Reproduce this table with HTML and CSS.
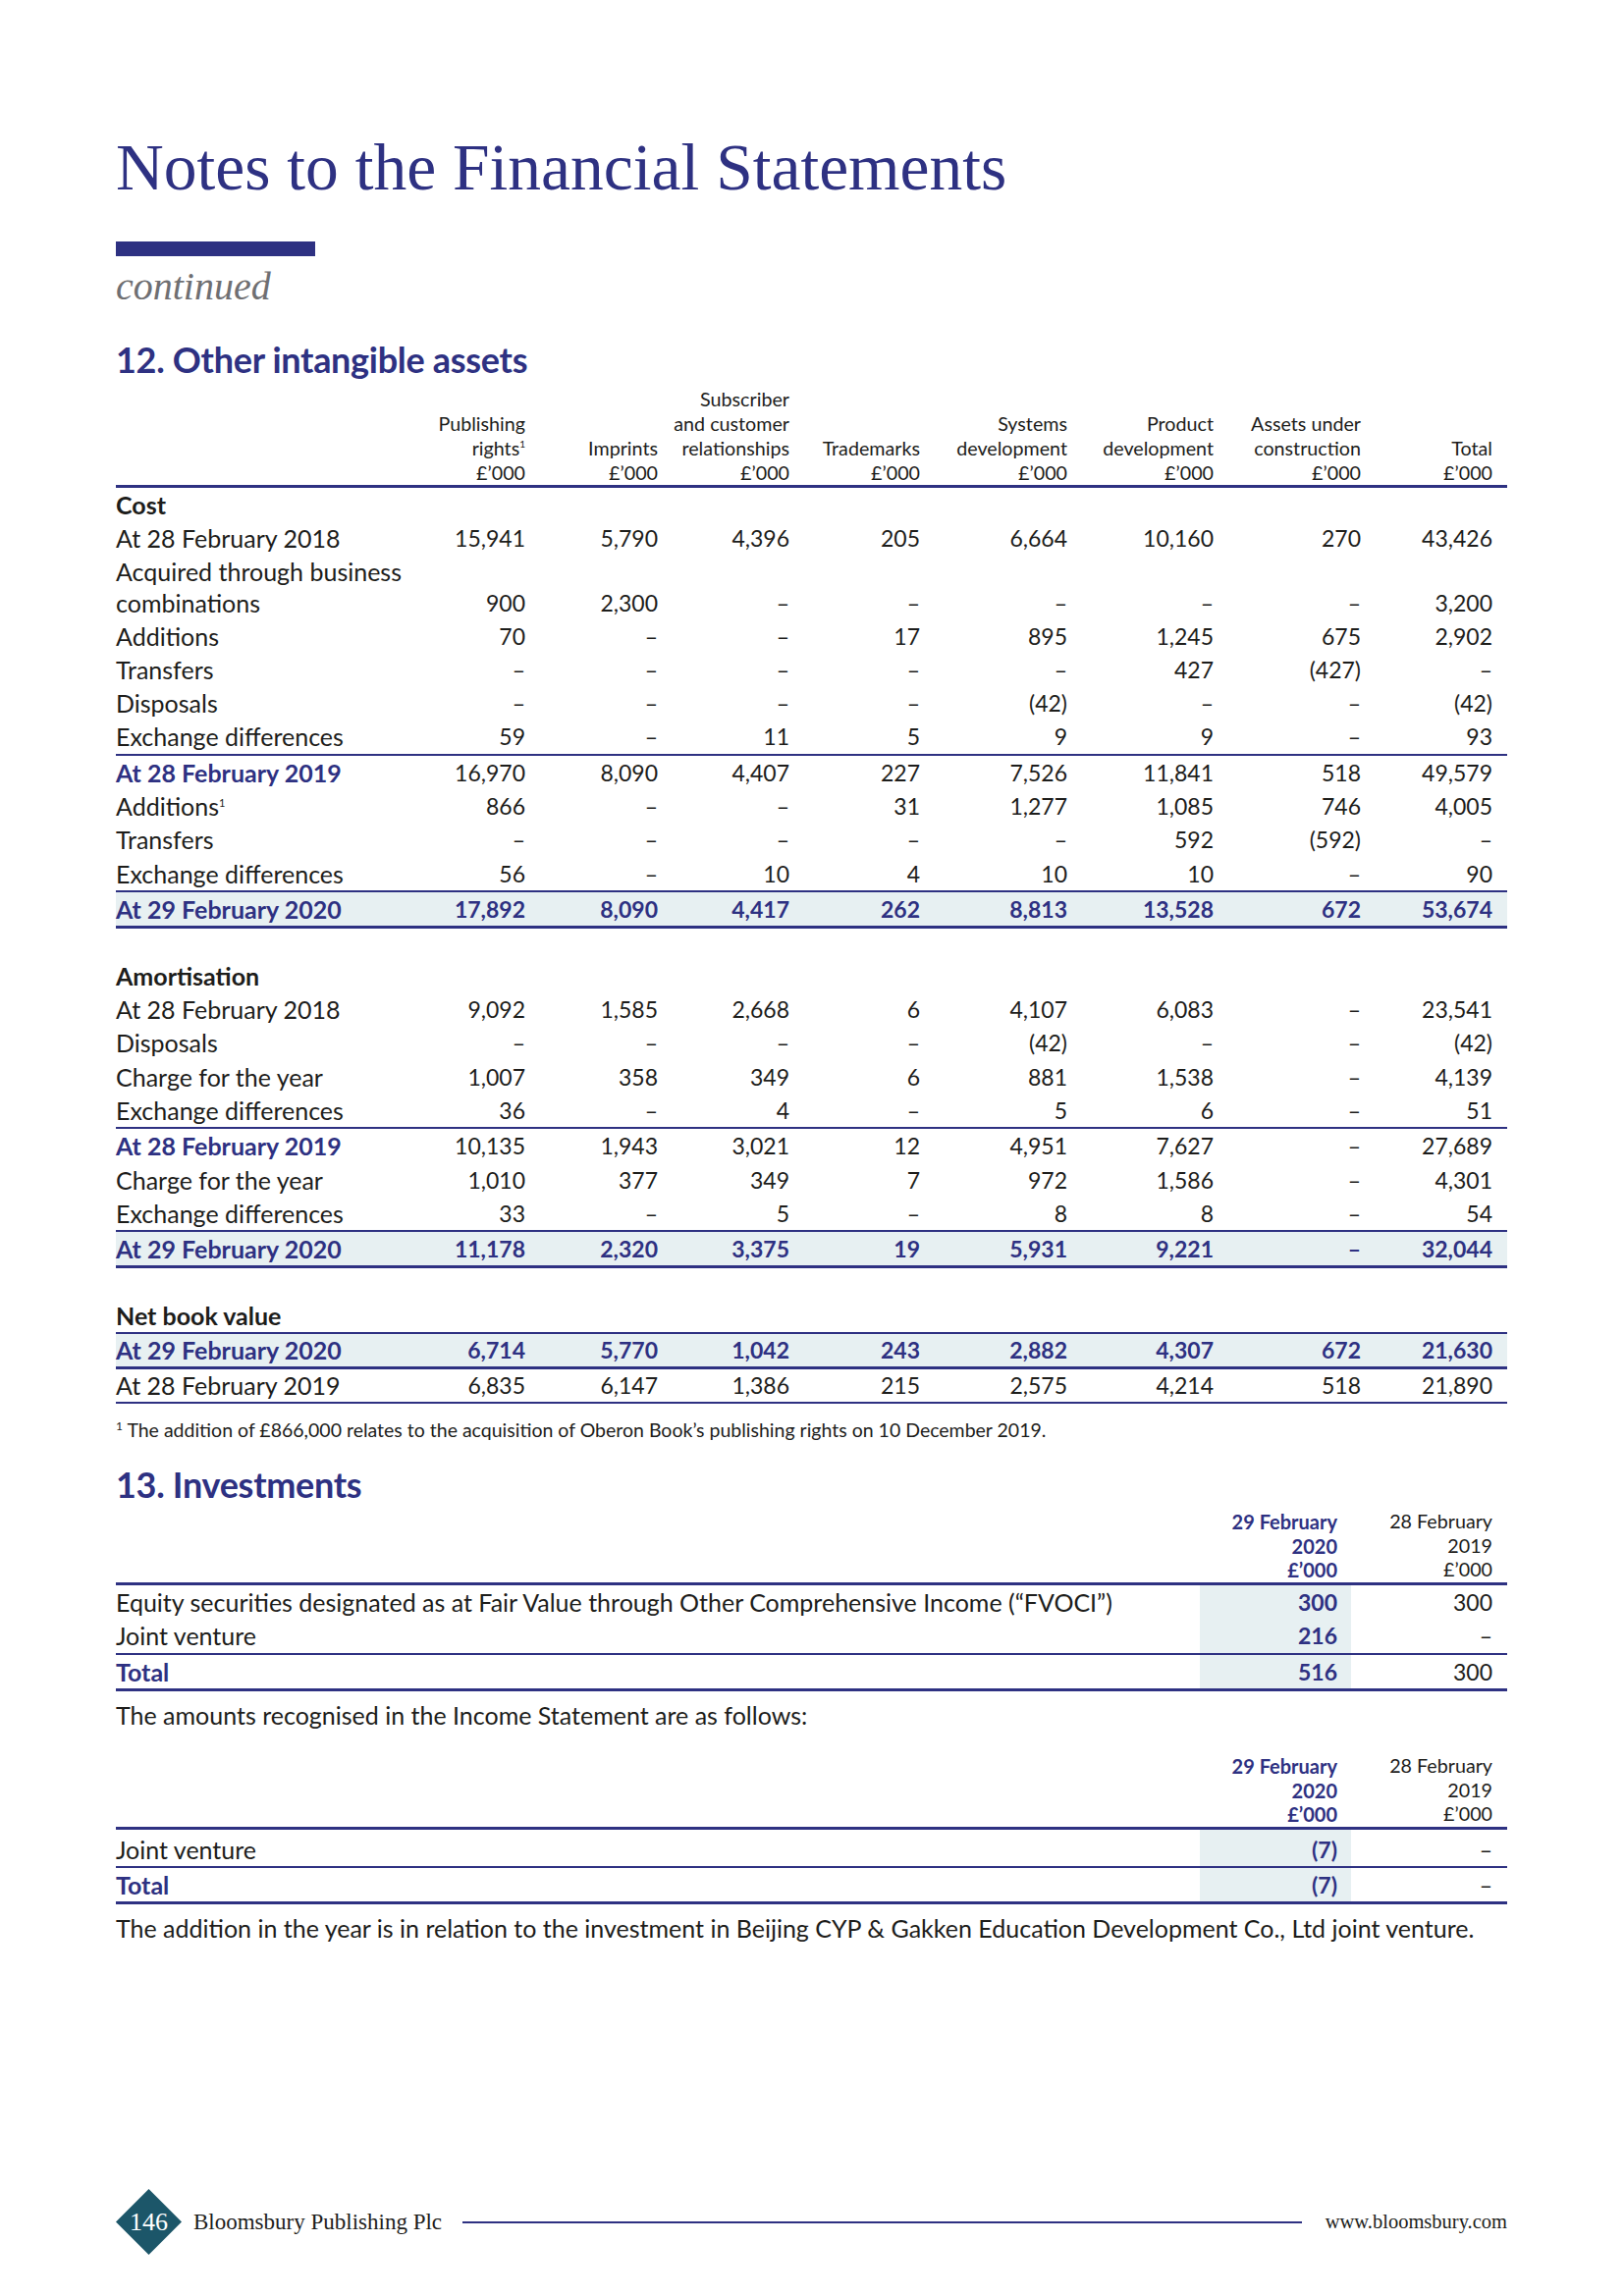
FILE: index.html
```html
<!DOCTYPE html>
<html lang="en">
<head>
<meta charset="utf-8">
<title>Notes to the Financial Statements</title>
<link rel="stylesheet" href="styles.css">
</head>
<body>
<div class="page">
  <h1 class="title">Notes to the Financial Statements</h1>
  <div class="rule"></div>
  <div class="continued">continued</div>

  <h2 class="section">12. Other intangible assets</h2>
  <table class="fin">
    <colgroup>
      <col class="cl"><col class="w135"><col class="w135"><col class="w134"><col class="w133"><col class="w150"><col class="w149"><col class="w150"><col class="w134">
    </colgroup>
    <thead>
      <tr>
        <th></th>
        <th>Publishing<br>rights<sup>1</sup><br>£’000</th>
        <th>Imprints<br>£’000</th>
        <th>Subscriber<br>and customer<br>relationships<br>£’000</th>
        <th>Trademarks<br>£’000</th>
        <th>Systems<br>development<br>£’000</th>
        <th>Product<br>development<br>£’000</th>
        <th>Assets under<br>construction<br>£’000</th>
        <th>Total<br>£’000</th>
      </tr>
    </thead>
    <tbody>
      <tr class="sub"><td>Cost</td><td></td><td></td><td></td><td></td><td></td><td></td><td></td><td></td></tr>
      <tr><td>At 28 February 2018</td><td>15,941</td><td>5,790</td><td>4,396</td><td>205</td><td>6,664</td><td>10,160</td><td>270</td><td>43,426</td></tr>
      <tr class="two"><td>Acquired through business<br>combinations</td><td>900</td><td>2,300</td><td>–</td><td>–</td><td>–</td><td>–</td><td>–</td><td>3,200</td></tr>
      <tr><td>Additions</td><td>70</td><td>–</td><td>–</td><td>17</td><td>895</td><td>1,245</td><td>675</td><td>2,902</td></tr>
      <tr><td>Transfers</td><td>–</td><td>–</td><td>–</td><td>–</td><td>–</td><td>427</td><td>(427)</td><td>–</td></tr>
      <tr><td>Disposals</td><td>–</td><td>–</td><td>–</td><td>–</td><td>(42)</td><td>–</td><td>–</td><td>(42)</td></tr>
      <tr><td>Exchange differences</td><td>59</td><td>–</td><td>11</td><td>5</td><td>9</td><td>9</td><td>–</td><td>93</td></tr>
      <tr class="mid"><td>At 28 February 2019</td><td>16,970</td><td>8,090</td><td>4,407</td><td>227</td><td>7,526</td><td>11,841</td><td>518</td><td>49,579</td></tr>
      <tr><td>Additions<sup class="sm">1</sup></td><td>866</td><td>–</td><td>–</td><td>31</td><td>1,277</td><td>1,085</td><td>746</td><td>4,005</td></tr>
      <tr><td>Transfers</td><td>–</td><td>–</td><td>–</td><td>–</td><td>–</td><td>592</td><td>(592)</td><td>–</td></tr>
      <tr><td>Exchange differences</td><td>56</td><td>–</td><td>10</td><td>4</td><td>10</td><td>10</td><td>–</td><td>90</td></tr>
      <tr class="total"><td>At 29 February 2020</td><td>17,892</td><td>8,090</td><td>4,417</td><td>262</td><td>8,813</td><td>13,528</td><td>672</td><td>53,674</td></tr>
      <tr class="gap"><td colspan="9"></td></tr>
      <tr class="sub"><td>Amortisation</td><td></td><td></td><td></td><td></td><td></td><td></td><td></td><td></td></tr>
      <tr><td>At 28 February 2018</td><td>9,092</td><td>1,585</td><td>2,668</td><td>6</td><td>4,107</td><td>6,083</td><td>–</td><td>23,541</td></tr>
      <tr><td>Disposals</td><td>–</td><td>–</td><td>–</td><td>–</td><td>(42)</td><td>–</td><td>–</td><td>(42)</td></tr>
      <tr><td>Charge for the year</td><td>1,007</td><td>358</td><td>349</td><td>6</td><td>881</td><td>1,538</td><td>–</td><td>4,139</td></tr>
      <tr><td>Exchange differences</td><td>36</td><td>–</td><td>4</td><td>–</td><td>5</td><td>6</td><td>–</td><td>51</td></tr>
      <tr class="mid"><td>At 28 February 2019</td><td>10,135</td><td>1,943</td><td>3,021</td><td>12</td><td>4,951</td><td>7,627</td><td>–</td><td>27,689</td></tr>
      <tr><td>Charge for the year</td><td>1,010</td><td>377</td><td>349</td><td>7</td><td>972</td><td>1,586</td><td>–</td><td>4,301</td></tr>
      <tr><td>Exchange differences</td><td>33</td><td>–</td><td>5</td><td>–</td><td>8</td><td>8</td><td>–</td><td>54</td></tr>
      <tr class="total"><td>At 29 February 2020</td><td>11,178</td><td>2,320</td><td>3,375</td><td>19</td><td>5,931</td><td>9,221</td><td>–</td><td>32,044</td></tr>
      <tr class="gap"><td colspan="9"></td></tr>
      <tr class="sub"><td>Net book value</td><td></td><td></td><td></td><td></td><td></td><td></td><td></td><td></td></tr>
      <tr class="total nbv"><td>At 29 February 2020</td><td>6,714</td><td>5,770</td><td>1,042</td><td>243</td><td>2,882</td><td>4,307</td><td>672</td><td>21,630</td></tr>
      <tr class="last"><td>At 28 February 2019</td><td>6,835</td><td>6,147</td><td>1,386</td><td>215</td><td>2,575</td><td>4,214</td><td>518</td><td>21,890</td></tr>
    </tbody>
  </table>
  <p class="footnote"><sup>1</sup> The addition of £866,000 relates to the acquisition of Oberon Book’s publishing rights on 10 December 2019.</p>

  <h2 class="section sec13">13. Investments</h2>
  <table class="inv">
    <colgroup><col class="il"><col class="i1"><col class="i2"></colgroup>
    <thead>
      <tr><th></th><th class="cur">29 February<br>2020<br>£’000</th><th>28 February<br>2019<br>£’000</th></tr>
    </thead>
    <tbody>
      <tr><td>Equity securities designated as at Fair Value through Other Comprehensive Income (“FVOCI”)</td><td class="cur">300</td><td>300</td></tr>
      <tr><td>Joint venture</td><td class="cur">216</td><td>–</td></tr>
      <tr class="itotal"><td>Total</td><td class="cur">516</td><td>300</td></tr>
    </tbody>
  </table>
  <p class="para">The amounts recognised in the Income Statement are as follows:</p>
  <table class="inv inv2">
    <colgroup><col class="il"><col class="i1"><col class="i2"></colgroup>
    <thead>
      <tr><th></th><th class="cur">29 February<br>2020<br>£’000</th><th>28 February<br>2019<br>£’000</th></tr>
    </thead>
    <tbody>
      <tr><td>Joint venture</td><td class="cur">(7)</td><td>–</td></tr>
      <tr class="itotal"><td>Total</td><td class="cur">(7)</td><td>–</td></tr>
    </tbody>
  </table>
  <p class="para para2">The addition in the year is in relation to the investment in Beijing CYP &amp; Gakken Education Development Co., Ltd joint venture.</p>

  <footer class="footer">
    <div class="badge">146</div>
    <span class="company">Bloomsbury Publishing Plc</span>
    <span class="fline"></span>
    <span class="url">www.bloomsbury.com</span>
  </footer>
</div>
</body>
</html>
```

FILE: styles.css
```css
* { box-sizing: border-box; }
html, body { margin: 0; padding: 0; background: #fff; }
body { font-family: Lato, "Noto Sans", sans-serif; color: #1d1d1b; }

.page {
  width: 1654px;
  height: 2339px;
  padding: 131px 119px 42px 118px;
  display: flex;
  flex-direction: column;
}

.title {
  margin: 0;
  font: 400 67.5px/80px "Liberation Serif", serif;
  color: #2e3182;
}
.rule { width: 203px; height: 15px; background: #2e3182; margin-top: 35px; }
.continued {
  margin-top: 7px;
  font: italic 400 40px/48px "Liberation Serif", serif;
  color: #6f6f72;
}
.section {
  margin: 30px 0 0;
  font: 700 36px/40px Lato, sans-serif;
  color: #2e3182;
  letter-spacing: -0.3px;
}

table { border-collapse: collapse; table-layout: fixed; width: 1417px; }
.fin { margin-top: 8px; }
.fin col.cl { width: 297px; }
.fin col.w135 { width: 135px; }
.fin col.w134 { width: 134px; }
.fin col.w133 { width: 133px; }
.fin col.w150 { width: 150px; }
.fin col.w149 { width: 149px; }

th {
  font-weight: 400;
  font-size: 19.7px;
  line-height: 25px;
  text-align: right;
  vertical-align: bottom;
  padding: 0 15px 0 0;
  color: #1d1d1b;
  white-space: nowrap;
}
thead tr { border-bottom: 3px solid #2e3182; }
th sup { font-size: 10px; vertical-align: 8px; line-height: 0; }

td {
  font-size: 23px;
  font-weight: 400;
  line-height: 34.3px;
  height: 34.3px;
  padding: 0 15px 0 0;
  text-align: right;
  vertical-align: bottom;
  white-space: nowrap;
}
td:first-child { text-align: left; padding: 0; font-size: 25px; }
.fin tr.two td { line-height: 32px; padding-bottom: 1px; }
.fin tr.two td:first-child { white-space: normal; }
sup.sm { font-size: 11px; vertical-align: 9px; line-height: 0; }

tr.sub td { font-weight: 700; }
tr.mid { border-top: 2px solid #2e3182; }
tr.mid td:first-child { font-weight: 700; color: #2e3182; }
tr.total { border-top: 2px solid #2e3182; border-bottom: 3px solid #2e3182; background: #e7f0f2; }
tr.total td { font-weight: 700; color: #2e3182; }
tr.nbv td { height: 33px; line-height: 33px; }
tr.last { border-bottom: 2px solid #2e3182; }
tr.last td { height: 33px; line-height: 33px; }
tr.gap td { height: 32px; }

.footnote { margin: 15px 0 0; font-size: 19.5px; line-height: 24px; }
.footnote sup { font-size: 12px; vertical-align: 7px; line-height: 0; }

.sec13 { margin-top: 23px; }

.inv col.il { width: 1104px; }
.inv col.i1 { width: 154px; }
.inv col.i2 { width: 159px; }
.inv { margin-top: 6px; }
.inv th { line-height: 24.6px; }
.inv th.cur { font-weight: 700; color: #2e3182; padding-right: 14px; font-size: 20px; }
.inv td.cur { background: #e7f0f2; font-weight: 700; color: #2e3182; padding-right: 14px; }
.inv td { line-height: 34.3px; height: 34.3px; }
.inv tr.itotal { border-top: 2px solid #2e3182; border-bottom: 3px solid #2e3182; }
.inv tr.itotal td:first-child { font-weight: 700; color: #2e3182; }

.para { margin: 9px 0 0; font-size: 25px; line-height: 30px; }
.inv2 { margin-top: 25px; }
.inv2 tbody tr:first-child td { padding-top: 3px; height: 36px; }
.para2 { margin-top: 9px; }

.footer {
  margin-top: auto;
  display: flex;
  align-items: center;
  height: 67px;
}
.badge {
  width: 67px;
  height: 67px;
  flex: none;
  display: flex;
  align-items: center;
  justify-content: center;
  background: #1c5669;
  clip-path: polygon(50% 0, 100% 50%, 50% 100%, 0 50%);
  color: #fff;
  font: 400 26px/1 "Liberation Serif", serif;
}
.company {
  margin-left: 12px;
  font: 400 23px/1 "Liberation Serif", serif;
  color: #1d1d1b;
}
.fline {
  flex: 1;
  height: 2px;
  background: #2e3182;
  margin: 0 24px 0 21px;
}
.url {
  font: 400 20.5px/1 "Liberation Serif", serif;
  color: #1d1d1b;
}
```
